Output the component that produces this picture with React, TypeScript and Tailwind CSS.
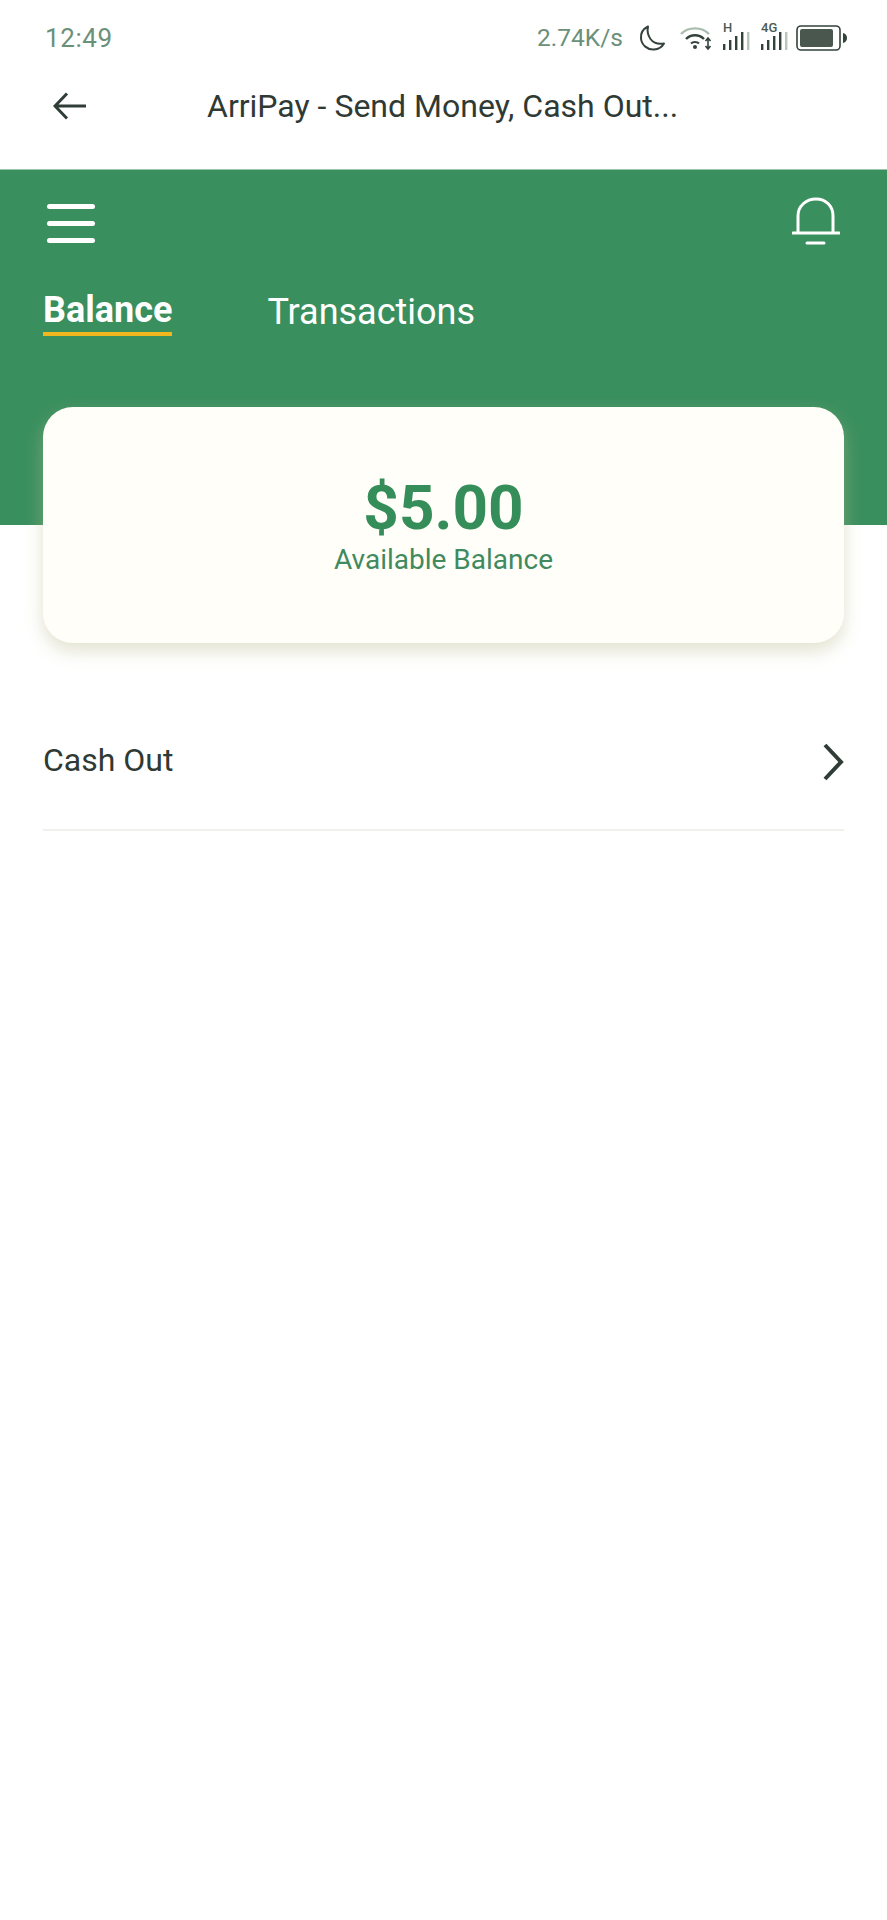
function SignalBars({ label }: { label: string }) {
  return (
    <div className="relative w-[27px] h-[26px]">
      <span className="absolute left-0 top-[-4px] text-[13px] leading-[14px] font-medium text-[#4b5b51]">{label}</span>
      <svg width="27" height="26" viewBox="0 0 27 26" className="absolute left-0 top-0">
        <rect x="0" y="19" width="2.4" height="6" fill="#33423a" />
        <rect x="6" y="15" width="2.4" height="10" fill="#33423a" />
        <rect x="12" y="11" width="2.4" height="14" fill="#33423a" />
        <rect x="18" y="7" width="2.4" height="18" fill="#33423a" />
        <rect x="24" y="7" width="2.4" height="18" fill="#b9c6bd" />
      </svg>
    </div>
  )
}

function StatusIcons() {
  return (
    <div className="flex items-center">
      <svg width="28" height="28" viewBox="0 0 28 28" fill="none" className="ml-[15px]">
        <path d="M10 2.5C5 5 2.5 9.5 3 14.5C3.6 21 9.5 26 16 25.5C20 25.2 24 23 26 19.5C20 20.5 15.5 19 12.5 15C10 11.5 9 7 10 2.5Z" stroke="#33423a" strokeWidth="2" strokeLinejoin="round" />
      </svg>
      <svg width="32" height="26" viewBox="0 0 32 26" fill="none" className="ml-[14px]">
        <path d="M1 9C8 1.5 22 1.5 29 9" stroke="#a9bcae" strokeWidth="2.4" />
        <path d="M6 14C11 9 19 9 24 14" stroke="#33423a" strokeWidth="2.4" />
        <path d="M11 18.5C13 16.5 17 16.5 19 18.5" stroke="#33423a" strokeWidth="2.2" />
        <circle cx="15" cy="22" r="2" fill="#33423a" />
        <path d="M28 13V24M25.5 16L28 13L30.5 16M25.5 21L28 24L30.5 21" stroke="#33423a" strokeWidth="1.6" />
      </svg>
      <div className="ml-[11px]">
        <SignalBars label="H" />
      </div>
      <div className="ml-[11px]">
        <SignalBars label="4G" />
      </div>
      <svg width="52" height="26" viewBox="0 0 52 26" fill="none" className="ml-[8px]">
        <rect x="1" y="1" width="43" height="24" rx="4" stroke="#33423a" strokeWidth="1.6" />
        <rect x="4" y="4" width="33" height="18" rx="2" fill="#4a574f" />
        <path d="M47 8C50 8.5 51 11 51 13C51 15 50 17.500 47 18Z" fill="#33423a" />
      </svg>
    </div>
  )
}

export default function App() {
  return (
    <div className="min-h-[1920px] bg-white font-['Roboto',sans-serif]">
      <div className="h-[170px] bg-white border-b border-[#9dc4ac]">
        <div className="h-[76px] pl-[45px] pr-[39px] flex items-center justify-between">
          <span className="text-[26px] text-[#6b9079] tracking-[0.6px]">12:49</span>
          <div className="flex items-center">
            <span className="text-[24.5px] text-[#6b9079]">2.74K/s</span>
            <StatusIcons />
          </div>
        </div>
        <div className="h-[60px] flex items-center">
          <svg width="34" height="28" viewBox="0 0 34 28" fill="none" className="ml-[53px]">
            <path d="M14 1.500L2 14L14 26.500M2 14H33" stroke="#2f3d36" strokeWidth="3" />
          </svg>
          <span className="ml-[120px] text-[32px] text-[#2f3a35]">ArriPay - Send Money, Cash Out...</span>
        </div>
      </div>

      <div className="h-[355px] bg-[#3a8f5e] pt-[34px]">
        <div className="pl-[47px] pr-[47px] flex items-start justify-between">
          <div className="w-[48px] flex flex-col gap-[12px]">
            <div className="h-[5px] rounded-full bg-white" />
            <div className="h-[5px] rounded-full bg-white" />
            <div className="h-[5px] rounded-full bg-white" />
          </div>
          <svg width="48" height="50" viewBox="0 0 48 50" fill="none" className="-mt-[7px]">
            <path d="M6 36V19C6 9 14 2 24 2C34 2 41 9 41 19V36" stroke="white" strokeWidth="3" />
            <path d="M1 36H47" stroke="white" strokeWidth="3" strokeLinecap="round" />
            <path d="M15 46H32" stroke="white" strokeWidth="3" strokeLinecap="round" />
          </svg>
        </div>
        <div className="mt-[40px] pl-[43px] flex items-start">
          <div className="flex flex-col">
            <span className="text-[36px] leading-[46px] font-bold text-white">Balance</span>
            <div className="-mt-[1px] h-[4px] bg-[#f2b61f]" />
          </div>
          <span className="ml-[95px] text-[36px] leading-[50px] text-white">Transactions</span>
        </div>
      </div>

      <div className="mx-[43px] -mt-[118px] relative h-[236px] rounded-[30px] bg-[#fffef9] shadow-[0_8px_18px_rgba(190,190,150,0.45)] flex flex-col items-center pt-[68px]">
        <span className="text-[62px] leading-[66px] font-bold text-[#358d5a]">$5.00</span>
        <span className="text-[28px] leading-[34px] text-[#3f8a5e] mt-[2px]">Available Balance</span>
      </div>

      <div className="mx-[43px] mt-[58px] h-[130px] border-b-2 border-[#f1f1ec] flex items-center justify-between pb-[6px]">
        <span className="text-[32px] text-[#2f3a35] mb-[5px]">Cash Out</span>
        <svg width="22" height="38" viewBox="0 0 22 38" fill="none">
          <path d="M3 2L19 19L3 36" stroke="#2f3d36" strokeWidth="4" />
        </svg>
      </div>
    </div>
  )
}
